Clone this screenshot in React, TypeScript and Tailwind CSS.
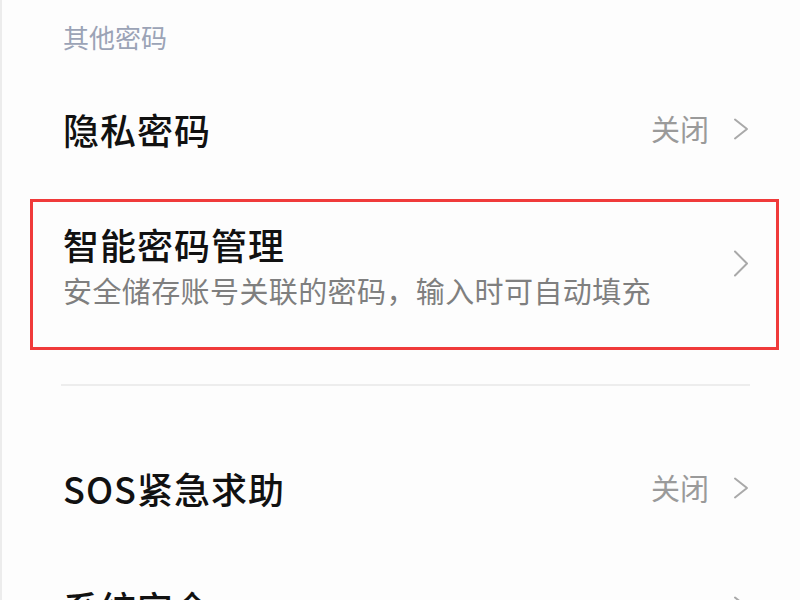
import React from "react";

const font = { fontFamily: '"Noto Sans CJK SC", "Noto Sans", sans-serif' };

function Chevron({ tall = false }: { tall?: boolean }) {
  return (
    <svg
      width="16"
      height={tall ? 27 : 22}
      viewBox={tall ? "0 0 16 27" : "0 0 16 22"}
      fill="none"
      stroke="#a9a9a9"
      strokeWidth="2"
      strokeLinecap="round"
      strokeLinejoin="round"
    >
      {tall ? <path d="M2 1.5 L14 13.5 L2 25.5" /> : <path d="M2 1.5 L14 11 L2 20.5" />}
    </svg>
  );
}

function Row({ title, value }: { title: string; value?: string }) {
  return (
    <div className="flex h-[114px] shrink-0 items-center pl-[33px] pr-[30px]">
      <span className="flex-1 text-[36px] font-medium tracking-[1px] text-[#111111]">{title}</span>
      {value && <span className="mr-[24px] text-[29px] text-[#9a9a9a]">{value}</span>}
      <Chevron />
    </div>
  );
}

export default function App() {
  return (
    <div className="flex h-[600px] w-[800px] overflow-hidden bg-[#fdfdfd]" style={font}>
      <div className="w-[2px] shrink-0 bg-[#ececec]" />
      <div className="flex-1 pl-[28px] pr-[21px]">
        <div className="flex h-[72px] items-center pl-[33px]">
          <span className="text-[26px] text-[#9ba3b6]">其他密码</span>
        </div>

        <Row title="隐私密码" value="关闭" />

        <div className="mt-[13px] flex items-start border-[3px] border-[#f03a3a] pl-[30px] pr-[27px] pt-[19px] pb-[34px]">
          <div className="flex flex-1 flex-col">
            <span className="text-[36px] font-medium leading-[46px] tracking-[1px] text-[#111111]">
              智能密码管理
            </span>
            <span className="text-[29px] leading-[46px] tracking-[0.4px] text-[#7f7f7f]">
              安全储存账号关联的密码，输入时可自动填充
            </span>
          </div>
          <div className="mt-[29px]">
            <Chevron tall />
          </div>
        </div>

        <div className="mt-[34px] ml-[31px] mr-[29px] h-[2px] bg-[#ededed]" />

        <div className="mt-[45px]">
          <Row title="SOS紧急求助" value="关闭" />
        </div>
        <div className="mt-[5px]">
          <Row title="系统安全" />
        </div>
      </div>
    </div>
  );
}
